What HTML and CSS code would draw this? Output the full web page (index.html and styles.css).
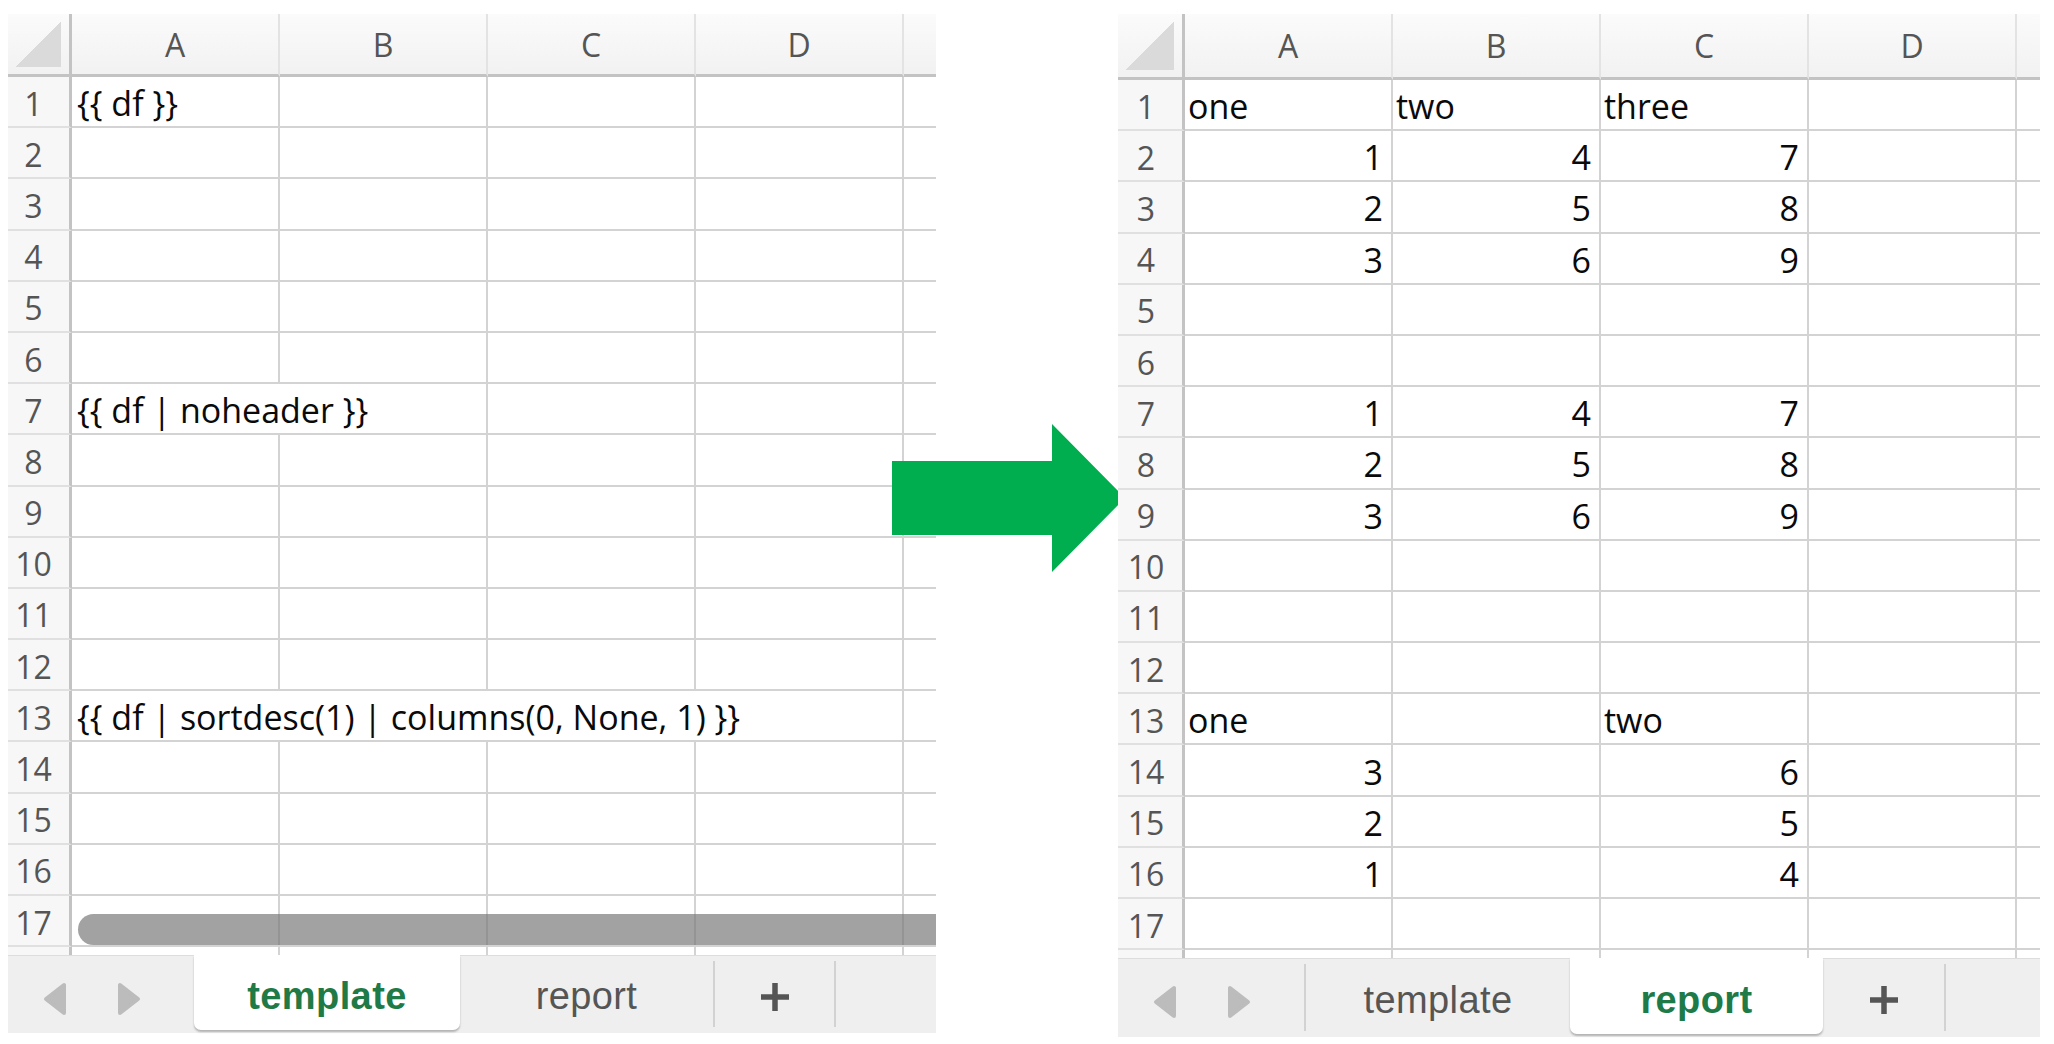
FILE: index.html
```html
<!DOCTYPE html>
<html lang="en">
<head>
    <meta charset="UTF-8">
    <meta name="viewport" content="width=device-width, initial-scale=1.0">
    <title>template / report</title>
    <link rel="stylesheet" href="styles.css">
</head>
<body>
    <main class="cena">
        <!-- pasta com a aba template -->
        <section class="livro esquerda">
            <div class="planilha">
                <div class="linha cabecalho">
                    <div class="canto"></div><div>A</div><div>B</div><div>C</div><div>D</div><div></div>
                </div>
                <div class="linha"><div class="num">1</div><div class="txt">{{ df }}</div><div></div><div></div><div></div><div></div></div>
                <div class="linha"><div class="num">2</div><div></div><div></div><div></div><div></div><div></div></div>
                <div class="linha"><div class="num">3</div><div></div><div></div><div></div><div></div><div></div></div>
                <div class="linha"><div class="num">4</div><div></div><div></div><div></div><div></div><div></div></div>
                <div class="linha"><div class="num">5</div><div></div><div></div><div></div><div></div><div></div></div>
                <div class="linha"><div class="num">6</div><div></div><div></div><div></div><div></div><div></div></div>
                <div class="linha"><div class="num">7</div><div class="txt span2">{{ df | noheader }}</div><div></div><div></div><div></div></div>
                <div class="linha"><div class="num">8</div><div></div><div></div><div></div><div></div><div></div></div>
                <div class="linha"><div class="num">9</div><div></div><div></div><div></div><div></div><div></div></div>
                <div class="linha"><div class="num">10</div><div></div><div></div><div></div><div></div><div></div></div>
                <div class="linha"><div class="num">11</div><div></div><div></div><div></div><div></div><div></div></div>
                <div class="linha"><div class="num">12</div><div></div><div></div><div></div><div></div><div></div></div>
                <div class="linha"><div class="num">13</div><div class="txt span4">{{ df | sortdesc(1) | columns(0, None, 1) }}</div><div></div></div>
                <div class="linha"><div class="num">14</div><div></div><div></div><div></div><div></div><div></div></div>
                <div class="linha"><div class="num">15</div><div></div><div></div><div></div><div></div><div></div></div>
                <div class="linha"><div class="num">16</div><div></div><div></div><div></div><div></div><div></div></div>
                <div class="linha"><div class="num">17</div><div></div><div></div><div></div><div></div><div></div></div>
                <div class="linha"><div class="num"></div><div></div><div></div><div></div><div></div><div></div></div>
                <div class="rolagem"></div>
            </div>
            <nav class="abas">
                <div class="setas">
                    <svg width="24" height="34" viewBox="0 0 24 34"><polygon points="21,3 21,31 3,17" fill="#bcbcbc" stroke="#bcbcbc" stroke-width="4" stroke-linejoin="round"/></svg>
                    <svg width="24" height="34" viewBox="0 0 24 34"><polygon points="3,3 3,31 21,17" fill="#bcbcbc" stroke="#bcbcbc" stroke-width="4" stroke-linejoin="round"/></svg>
                </div>
                <div class="aba aba-template ativa">template</div>
                <div class="aba aba-report">report</div>
                <div class="aba aba-mais">
                    <svg width="32" height="32" viewBox="0 0 32 32"><path d="M16 2v28M2 16h28" stroke="#555" stroke-width="5.5"/></svg>
                </div>
                <div class="aba resto"></div>
            </nav>
        </section>

        <svg class="seta" width="233" height="148" viewBox="0 0 233 148">
            <polygon points="0,37 160,37 160,0 233,74 160,148 160,111 0,111" fill="#00ad4f"/>
        </svg>

        <!-- pasta com a aba report -->
        <section class="livro direita">
            <div class="planilha">
                <div class="linha cabecalho">
                    <div class="canto"></div><div>A</div><div>B</div><div>C</div><div>D</div><div></div>
                </div>
                <div class="linha"><div class="num">1</div><div class="txt">one</div><div class="txt">two</div><div class="txt">three</div><div></div><div></div></div>
                <div class="linha"><div class="num">2</div><div class="n">1</div><div class="n">4</div><div class="n">7</div><div></div><div></div></div>
                <div class="linha"><div class="num">3</div><div class="n">2</div><div class="n">5</div><div class="n">8</div><div></div><div></div></div>
                <div class="linha"><div class="num">4</div><div class="n">3</div><div class="n">6</div><div class="n">9</div><div></div><div></div></div>
                <div class="linha"><div class="num">5</div><div></div><div></div><div></div><div></div><div></div></div>
                <div class="linha"><div class="num">6</div><div></div><div></div><div></div><div></div><div></div></div>
                <div class="linha"><div class="num">7</div><div class="n">1</div><div class="n">4</div><div class="n">7</div><div></div><div></div></div>
                <div class="linha"><div class="num">8</div><div class="n">2</div><div class="n">5</div><div class="n">8</div><div></div><div></div></div>
                <div class="linha"><div class="num">9</div><div class="n">3</div><div class="n">6</div><div class="n">9</div><div></div><div></div></div>
                <div class="linha"><div class="num">10</div><div></div><div></div><div></div><div></div><div></div></div>
                <div class="linha"><div class="num">11</div><div></div><div></div><div></div><div></div><div></div></div>
                <div class="linha"><div class="num">12</div><div></div><div></div><div></div><div></div><div></div></div>
                <div class="linha"><div class="num">13</div><div class="txt">one</div><div></div><div class="txt">two</div><div></div><div></div></div>
                <div class="linha"><div class="num">14</div><div class="n">3</div><div></div><div class="n">6</div><div></div><div></div></div>
                <div class="linha"><div class="num">15</div><div class="n">2</div><div></div><div class="n">5</div><div></div><div></div></div>
                <div class="linha"><div class="num">16</div><div class="n">1</div><div></div><div class="n">4</div><div></div><div></div></div>
                <div class="linha"><div class="num">17</div><div></div><div></div><div></div><div></div><div></div></div>
                <div class="linha"><div class="num"></div><div></div><div></div><div></div><div></div><div></div></div>
            </div>
            <nav class="abas">
                <div class="setas">
                    <svg width="24" height="34" viewBox="0 0 24 34"><polygon points="21,3 21,31 3,17" fill="#bcbcbc" stroke="#bcbcbc" stroke-width="4" stroke-linejoin="round"/></svg>
                    <svg width="24" height="34" viewBox="0 0 24 34"><polygon points="3,3 3,31 21,17" fill="#bcbcbc" stroke="#bcbcbc" stroke-width="4" stroke-linejoin="round"/></svg>
                </div>
                <div class="aba aba-template">template</div>
                <div class="aba aba-report ativa">report</div>
                <div class="aba aba-mais">
                    <svg width="32" height="32" viewBox="0 0 32 32"><path d="M16 2v28M2 16h28" stroke="#555" stroke-width="5.5"/></svg>
                </div>
                <div class="aba resto"></div>
            </nav>
        </section>
    </main>
</body>
</html>
```

FILE: styles.css
```css
:root {
    --grade: #d3d3d3;
    --grade-forte: #c3c3c3;
    --cinza-texto: #555555;
    --verde: #1e7a46;
    --verde-seta: #00ad4f;
    --barra: #efefef;
}

* {
    padding: 0px;
    margin: 0px;
    box-sizing: border-box;
}

body {
    background-color: #ffffff;
    font-family: "Open Sans", "Liberation Sans", sans-serif;
    width: 2054px;
    height: 1044px;
    overflow: hidden;
}

.cena {
    position: relative;
    display: flex;
    justify-content: space-between;
    align-items: flex-start;
    padding: 14px 14px 0px 8px;
    height: 100%;
}

.livro {
    display: flex;
    flex-direction: column;
    width: 928px;
    height: 1019px;
}

.livro.direita {
    width: 922px;
    height: 1023px;
}

.planilha {
    position: relative;
    flex: 1;
    overflow: hidden;
}

/* linhas da grade */
.linha {
    display: grid;
    grid-template-columns: 64px repeat(4, 208px) 1fr;
    height: 51.2px;
}

.direita .linha {
    grid-template-columns: 67px repeat(4, 208px) 1fr;
}

.linha>div {
    border-right: 2px solid var(--grade);
    border-bottom: 2px solid var(--grade);
    display: flex;
    align-items: center;
    font-size: 34px;
    color: #0a0a0a;
    white-space: nowrap;
    padding-top: 3px;
}

.linha>div:last-child {
    border-right: none;
}

.linha>.num {
    background-color: #f7f7f7;
    border-right: 3px solid var(--grade-forte);
    border-bottom-color: #e0e0e0;
    justify-content: center;
    padding-right: 10px;
    font-size: 32px;
    color: var(--cinza-texto);
}

.direita .linha>.num {
    padding-right: 8px;
}

.linha>.txt {
    padding-left: 5px;
}

.direita .linha>.txt {
    padding-left: 3px;
}

.linha>.n {
    justify-content: flex-end;
    padding-right: 8px;
}

.span2 {
    grid-column: span 2;
}

.span4 {
    grid-column: span 4;
}

/* cabecalho com as letras */
.linha.cabecalho {
    height: 63px;
    background: linear-gradient(#fbfbfb, #f1f1f1);
}

.direita .linha.cabecalho {
    height: 66px;
}

.cabecalho>div {
    justify-content: center;
    font-size: 32px;
    color: var(--cinza-texto);
    border-right: 2px solid #e3e3e3;
    border-bottom: 3px solid var(--grade-forte);
    padding-top: 0px;
}

.cabecalho>.canto {
    border-right: 3px solid var(--grade-forte);
    padding: 8px 8px 7px 7px;
    background: linear-gradient(to bottom right, transparent 50%, #dadada 50%) content-box;
}

.rolagem {
    position: absolute;
    left: 70px;
    right: -24px;
    top: 900px;
    height: 31px;
    border-radius: 16px;
    background-color: rgba(118, 118, 118, 0.68);
}

/* barra de abas */
.abas {
    display: flex;
    height: 78px;
    background-color: var(--barra);
    border-top: 1px solid #dddddd;
    font-family: "Liberation Sans", Arial, sans-serif;
    font-size: 38px;
    letter-spacing: 0.4px;
    color: var(--cinza-texto);
}

.direita .abas {
    height: 79px;
}

.setas {
    width: 186px;
    display: flex;
    align-items: center;
    justify-content: center;
    gap: 50px;
    padding: 8px 18px 0px 0px;
}

.aba {
    display: flex;
    align-items: center;
    justify-content: center;
    margin: 5px 0px 6px;
    padding-top: 5px;
    border-left: 2px solid #d2d2d2;
}

.aba.ativa,
.aba.ativa+.aba {
    border-left: none;
}

.aba.ativa {
    margin: -1px 0px 3px;
    padding-top: 8px;
    background-color: #ffffff;
    color: var(--verde);
    font-weight: bold;
    border-radius: 0px 0px 7px 7px;
    box-shadow: 0px 2px 2px rgba(0, 0, 0, 0.25);
}

.aba-template {
    width: 266px;
}

.aba-report {
    width: 253px;
}

.aba-mais {
    width: 121px;
}

.aba.resto {
    flex: 1;
}

.seta {
    position: absolute;
    left: 892px;
    top: 424px;
}
```
